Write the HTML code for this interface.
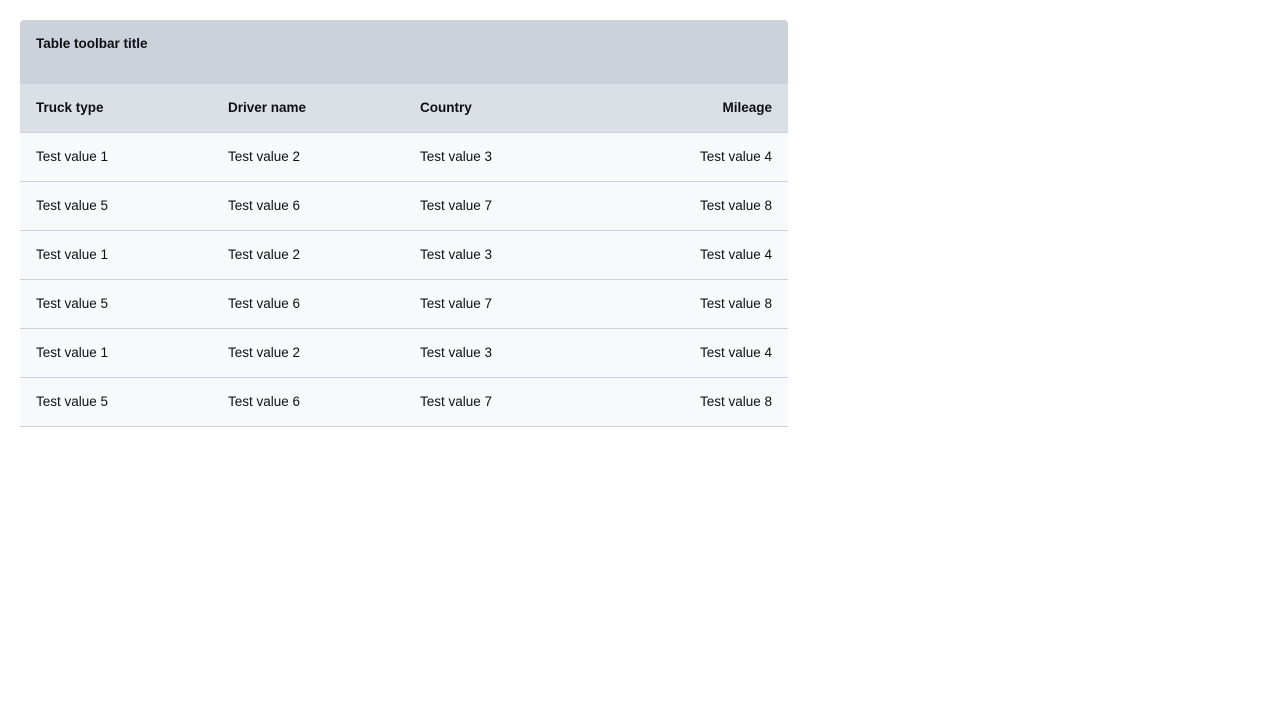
<!DOCTYPE html>
<html><head><style>
body{margin:0;background:#fff;font-family:"Liberation Sans",sans-serif;color:#0d0f12;}
.w{position:absolute;left:20px;top:20px;width:768px;}
.tb{height:64px;background:#cdd1db;border-radius:4px 4px 0 0;box-sizing:border-box;padding:16px 16px;font-size:13.5px;font-weight:bold;line-height:16px;}
table{border-collapse:collapse;width:768px;font-size:13.5px;}
td,th{height:48px;padding:0 16px 1px;text-align:left;border-bottom:1px solid #cdd1db;width:160px;box-sizing:border-box;}
th{background:#dbdfe6;font-weight:bold;font-size:13.5px;}
td{background:#f8f9fb;height:49px;}
.r{text-align:right;}
</style></head><body><div class="w">
<div class="tb">Table toolbar title</div>
<table>
<tr><th>Truck type</th><th>Driver name</th><th>Country</th><th class="r">Mileage</th></tr>
<tr><td>Test value 1</td><td>Test value 2</td><td>Test value 3</td><td class="r">Test value 4</td></tr>
<tr><td>Test value 5</td><td>Test value 6</td><td>Test value 7</td><td class="r">Test value 8</td></tr>
<tr><td>Test value 1</td><td>Test value 2</td><td>Test value 3</td><td class="r">Test value 4</td></tr>
<tr><td>Test value 5</td><td>Test value 6</td><td>Test value 7</td><td class="r">Test value 8</td></tr>
<tr><td>Test value 1</td><td>Test value 2</td><td>Test value 3</td><td class="r">Test value 4</td></tr>
<tr><td>Test value 5</td><td>Test value 6</td><td>Test value 7</td><td class="r">Test value 8</td></tr>
</table></div></body></html>
